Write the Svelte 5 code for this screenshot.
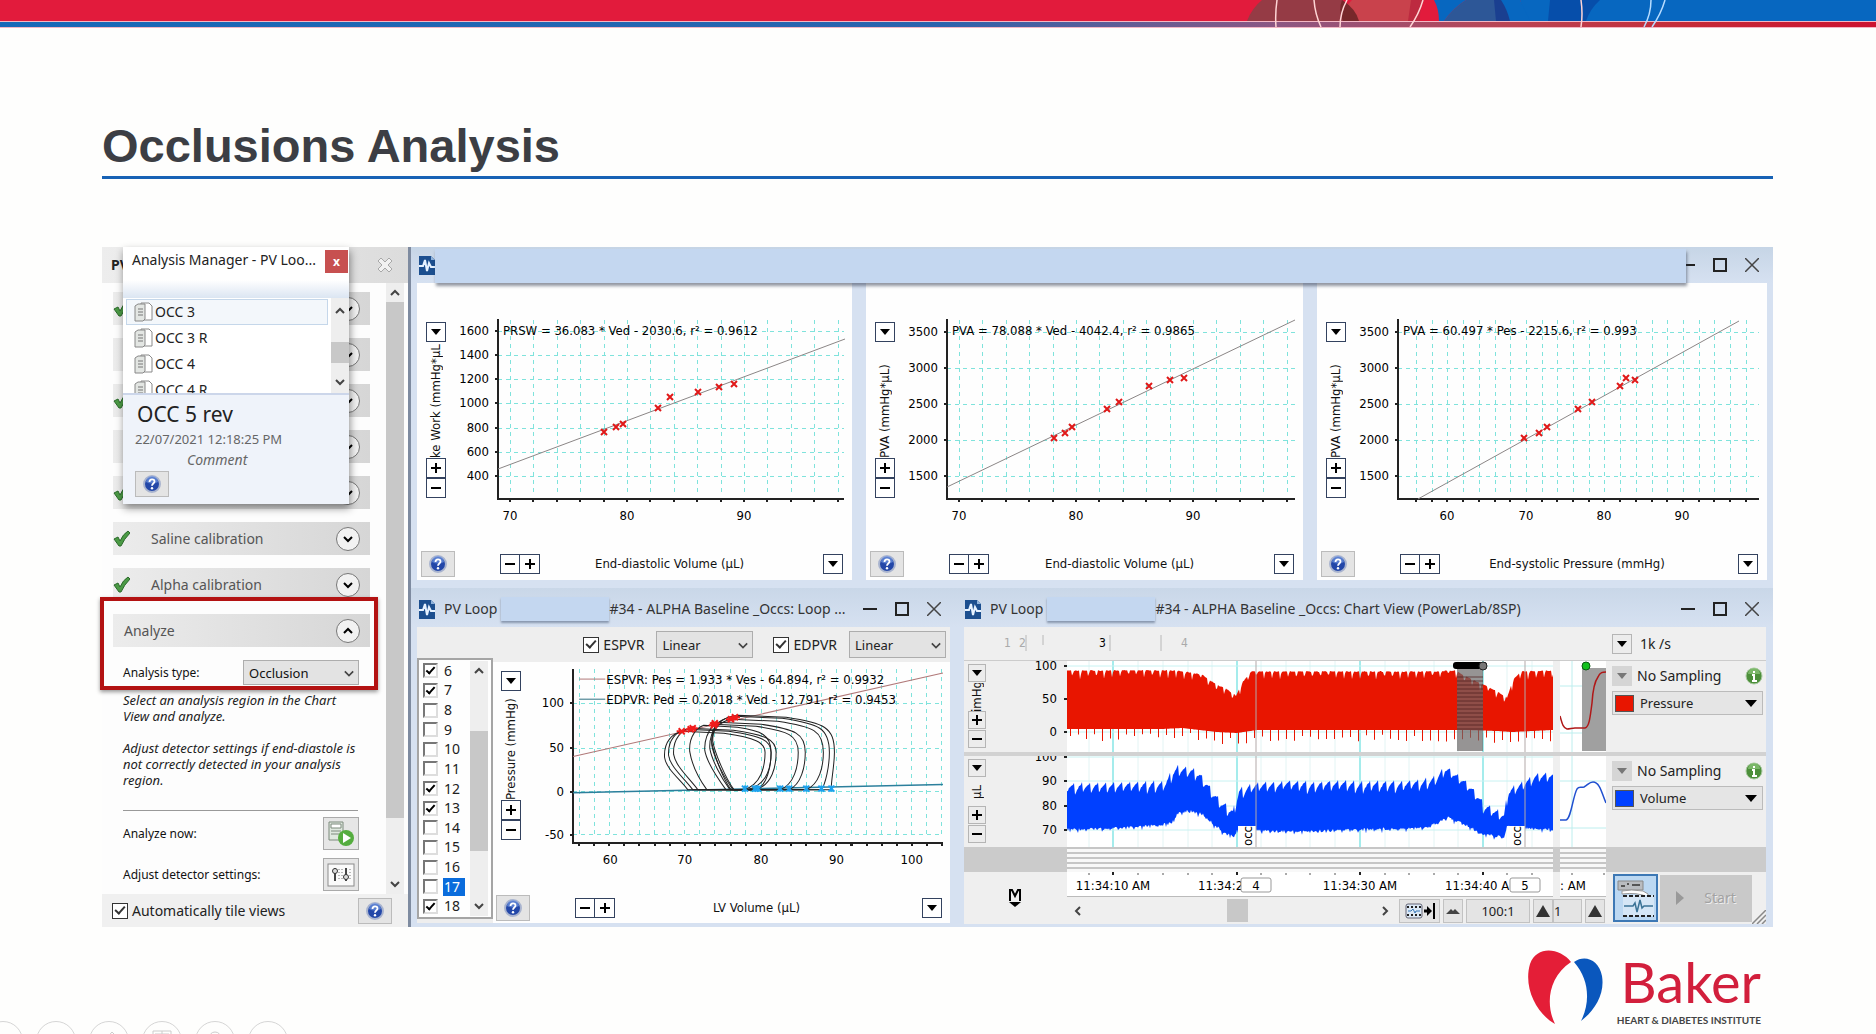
<script lang="ts">
  type Plot = {
    name: string;
    equation: string;
    yLabel: string;
    xLabel: string;
    width: number;
    axisX: number;
    grid: number[];
    xTicks: [number, number][];
    yTicks: [number, number][];
    line: number[];
    points: [number, number][];
  };

  // evenly spaced positions, rounded so that the thin grid lines stay crisp
  function steps(start: number, step: number, count: number) {
    return Array.from({ length: count }, (_, i) => Math.round(start + i * step));
  }

  const pvaTicks: [number, number][] = [[3500, 17], [3000, 53], [2500, 89], [2000, 125], [1500, 161]];

  const plots: Plot[] = [
    {
      name: 'prsw',
      equation: 'PRSW = 36.083 * Ved - 2030.6, r² = 0.9612',
      yLabel: 'ke Work (mmHg*µL',
      xLabel: 'End-diastolic Volume (µL)',
      width: 397,
      axisX: 43,
      grid: steps(55, 23.4, 15),
      xTicks: [[70, 55], [80, 172], [90, 289]],
      yTicks: [[1600, 16], [1400, 40], [1200, 64], [1000, 88], [800, 113], [600, 137], [400, 161]],
      line: [43, 154, 390, 24],
      points: [[149, 117], [161, 112], [168, 109], [203, 93], [215, 82], [243, 77], [264, 72], [279, 69]],
    },
    {
      name: 'pva-ved',
      equation: 'PVA = 78.088 * Ved - 4042.4, r² = 0.9865',
      yLabel: 'PVA (mmHg*µL)',
      xLabel: 'End-diastolic Volume (µL)',
      width: 399,
      axisX: 43,
      grid: steps(55, 23.4, 15),
      xTicks: [[70, 55], [80, 172], [90, 289]],
      yTicks: pvaTicks,
      line: [43, 172, 391, 5],
      points: [[150, 123], [161, 118], [168, 112], [203, 94], [215, 87], [245, 71], [266, 65], [280, 63]],
    },
    {
      name: 'pva-pes',
      equation: 'PVA = 60.497 * Pes - 2215.6, r² = 0.993',
      yLabel: 'PVA (mmHg*µL)',
      xLabel: 'End-systolic Pressure (mmHg)',
      width: 412,
      axisX: 43,
      grid: steps(61, 15.7, 22),
      xTicks: [[60, 92], [70, 171], [80, 249], [90, 327]],
      yTicks: pvaTicks,
      line: [63, 184, 384, 6],
      points: [[169, 123], [184, 118], [192, 112], [223, 94], [237, 87], [265, 71], [271, 63], [280, 65]],
    },
  ];

  const loopGrid = steps(28, 15.05, 25).filter((x) => x < 392);
  const loopXTicks = [[60, 59], [70, 133], [80, 209], [90, 284], [100, 359]];
  const loopYTicks = [[100, 41], [50, 86], [0, 129], [-50, 172]];

  // end-systole, its pressure, leftmost x, bottom left x, bottom right x, rightmost x
  const loops = [
    [131, 69, 113, 136, 192, 213],
    [135, 67, 117, 141, 196, 219],
    [139, 66, 122, 146, 204, 224],
    [152, 63, 138, 155, 205, 219],
    [162, 62, 153, 174, 228, 246],
    [166, 60, 158, 178, 237, 253],
    [180, 57, 160, 181, 254, 271],
    [183, 54, 160, 179, 269, 277],
    [186, 53, 161, 182, 279, 282],
  ];
  const edMarks = [193, 203, 206, 228, 237, 254, 269, 279];
  const esMarks = [[130, 69], [139, 67], [141, 66], [162, 63], [163, 61], [179, 57], [183, 55]];

  function loopPath([es, y, left, bl, br, right]: number[]) {
    const top = y + (right - es) * 0.08;
    return (
      `M${es} ${y} C${left + 8} ${y + 2} ${left - 1} ${y + 10} ${left} ${y + 26}` +
      ` C${left + 2} ${y + 38} ${bl - 8} 116 ${bl} 127 L${br} 127` +
      ` C${right - 4} 122 ${right} 104 ${right} 90` +
      ` C${right} ${top + 4} ${right - 10} ${top} ${(es + right) / 2} ${y + 2} Z`
    );
  }

  let cycles = $state(
    [6, 7, 8, 9, 10, 11, 12, 13, 14, 15, 16, 17, 18].map((n) => ({
      n,
      on: [6, 7, 12, 13, 18].includes(n),
    }))
  );
  let selectedCycle = $state(17);

  // linear interpolation through [x, y] knots
  function envelope(knots: number[][], x: number) {
    for (let i = 1; i < knots.length; i++) {
      const [x0, y0] = knots[i - 1];
      const [x1, y1] = knots[i];
      if (x <= x1) return y0 + ((y1 - y0) * (x - x0)) / (x1 - x0);
    }
    return knots[knots.length - 1][1];
  }

  function jitter(n: number) {
    const v = Math.sin(n * 12.9898) * 43758.5453;
    return v - Math.floor(v);
  }

  const pressureTop = [[0, 9], [110, 9], [135, 13], [148, 22], [160, 28], [169, 34], [176, 20], [184, 10], [370, 10], [388, 9], [405, 18], [425, 27], [440, 36], [446, 18], [454, 10], [486, 9]];
  const pressureBottom = [[0, 68], [95, 68], [115, 67], [150, 71], [170, 72], [190, 69], [400, 69], [430, 70], [445, 71], [486, 69]];
  const volumeTop = [[0, 29], [98, 27], [106, 14], [112, 11], [130, 15], [142, 30], [152, 44], [166, 55], [172, 34], [184, 28], [220, 26], [350, 25], [370, 20], [378, 10], [386, 16], [402, 28], [416, 46], [437, 58], [441, 32], [456, 26], [470, 18], [486, 18]];
  const volumeBottom = [[0, 72], [70, 70], [104, 66], [110, 57], [120, 53], [136, 57], [148, 68], [158, 76], [167, 79], [172, 70], [190, 73], [230, 74], [360, 70], [380, 60], [396, 66], [414, 76], [437, 80], [440, 69], [486, 72]];

  function pressureTrace() {
    let d = 'M0 68';
    for (let x = 0; x <= 486; x++) {
      const notch = x % 8 === 5 ? 6 : x % 8 === 6 ? 3 : 0;
      d += ` L${x} ${(envelope(pressureTop, x) + notch * (0.4 + jitter(x)) + jitter(x + 3)).toFixed(1)}`;
    }
    for (let x = 486; x >= 0; x--) {
      const base = envelope(pressureBottom, x);
      d += ` L${x} ${base.toFixed(1)}`;
      if (x % 8 === 4) {
        const tip = base + 4 + jitter(x) * 8;
        d += ` L${x} ${tip.toFixed(1)} L${x - 1} ${tip.toFixed(1)} L${x - 1} ${base.toFixed(1)}`;
      }
    }
    return d + ' Z';
  }

  function volumeTrace() {
    let d = 'M0 70';
    for (let x = 0; x <= 486; x++) {
      const beat = Math.floor(x / 8);
      const rise = [9, 7, 4, 3, 1, 0, -1, -3][x % 8];
      const late = x > 175 ? 2 * jitter(beat) : 0;
      const tooth = rise * (0.7 + 0.4 * jitter(beat)) + late + jitter(x);
      d += ` L${x} ${(envelope(volumeTop, x) + tooth).toFixed(1)}`;
    }
    for (let x = 486; x >= 0; x--) {
      d += ` L${x} ${(envelope(volumeBottom, x) + jitter(x) * 3 + (x % 8 === 3 ? 3 : 0)).toFixed(1)}`;
    }
    return d + ' Z';
  }

  const channels = [
    {
      name: 'Pressure',
      unit: 'imHg',
      color: '#e81500',
      trace: pressureTrace(),
      ticks: [[100, 5], [50, 38], [0, 71]],
      strip: 'M0 55 C2 62 3 67 7 68 C10 68 12 67 15 67 H25 C29 66 30 58 32 42 C33 26 35 20 38 16 C40 11 43 11 46 11',
      stripColor: '#b01818',
    },
    {
      name: 'Volume',
      unit: 'µL',
      color: '#0040ff',
      trace: volumeTrace(),
      ticks: [[100, 1], [90, 25], [80, 50], [70, 74]],
      strip: 'M0 64 H6 C11 63 13 40 17 33 C19 30 21 32 24 31 C28 29 29 26 33 26 C40 26 42 38 46 47',
      stripColor: '#2050d0',
    },
  ];

  const sections = ['', '', '', '', '', 'Saline calibration', 'Alpha calibration'];
  const checkedSections = [0, 2, 4, 5, 6];
  const items = ['OCC 3', 'OCC 3 R', 'OCC 4', 'OCC 4 R'];

  let analysisType = $state('Occlusion');
  let autoTile = $state(true);
  let espvr = $state(true);
  let edpvr = $state(true);
  let espvrFit = $state('Linear');
  let edpvrFit = $state('Linear');
</script>

{#snippet helpButton()}
  <button class="help" aria-label="Help">
    <svg width="18" height="18" viewBox="0 0 18 18">
      <circle cx="9" cy="9" r="8" fill="#2347a8" stroke="#a9b4cf" stroke-width="2" />
      <path d="M3 7 A6 6 0 0 1 15 7 Q9 10 3 7Z" fill="#6f94e0" opacity=".7" />
      <path d="M6.5 7 C6.500 3.500 11.500 3.500 11.500 6.500 C11.500 8.500 9 8.500 9 10.800" fill="none" stroke="#fff" stroke-width="1.800" />
      <circle cx="9" cy="13.200" r="1.200" fill="#fff" />
    </svg>
  </button>
{/snippet}

{#snippet arrowButton(label: string)}
  <button class="box" aria-label={label}>
    <svg width="10" height="6" viewBox="0 0 10 6"><path d="M0 0 H10 L5 6Z" fill="#000" /></svg>
  </button>
{/snippet}

{#snippet signButton(plus: boolean)}
  <button class="box" aria-label={plus ? 'Zoom in' : 'Zoom out'}>
    <svg width="10" height="10" viewBox="0 0 10 10">
      <path d={plus ? 'M0 5 H10 M5 0 V10' : 'M0 5 H10'} stroke="#000" stroke-width="2" />
    </svg>
  </button>
{/snippet}

{#snippet chevron(d: string, size: number)}
  <svg class="chev" width={size} height={size} viewBox="0 0 12 12">
    <path {d} fill="none" stroke="#444" stroke-width="2" />
  </svg>
{/snippet}

{#snippet appIcon()}
  <svg class="app-icon" width="16" height="20" viewBox="0 0 16 20">
    <path d="M0 1 H12 L16 5 V20 H0Z" fill="#1c4f8f" />
    <path d="M12 1 L16 5 H12Z" fill="#8fb3dc" />
    <path d="M0 11 H4 L6 5 L8 16 L10 8 L12 12 H16" fill="none" stroke="#e6f2ff" stroke-width="2" />
  </svg>
{/snippet}

{#snippet windowControls()}
  <div class="win-controls">
    <button aria-label="Minimize"><svg width="14" height="14" viewBox="0 0 14 14"><path d="M0 7 H14" stroke="#222" stroke-width="2" /></svg></button>
    <button aria-label="Maximize"><svg width="14" height="14" viewBox="0 0 14 14"><rect x="1" y="1" width="12" height="12" fill="none" stroke="#222" stroke-width="2" /></svg></button>
    <button aria-label="Close"><svg width="14" height="14" viewBox="0 0 14 14"><path d="M0 0 L14 14 M14 0 L0 14" stroke="#444" stroke-width="1.500" /></svg></button>
  </div>
{/snippet}

{#snippet tick()}
  <svg class="tick" width="17" height="17" viewBox="0 0 17 17">
    <path d="M1 9 L5 7 L7 11 Q10 4 15 1 L17 3 Q11 9 8 16 L6 16Z" fill="#4b9a45" stroke="#2c6a2c" />
  </svg>
{/snippet}

<div class="slide">
  <div class="banner">
    <svg class="banner-art" viewBox="0 0 1876 28" preserveAspectRatio="none" aria-hidden="true">
      <defs>
        <linearGradient id="stripe">
          <stop offset="0" stop-color="#1769b8" />
          <stop offset=".5" stop-color="#2b63ad" />
          <stop offset=".68" stop-color="#8c5783" />
          <stop offset=".8" stop-color="#b84555" />
          <stop offset=".9" stop-color="#c52a38" />
          <stop offset="1" stop-color="#cc1230" />
        </linearGradient>
      </defs>
      <rect width="1876" height="21" fill="#e21b3c" />
      <path d="M1247 21 Q1252 8 1262 0 H1342 Q1356 9 1359 21Z" fill="#953b45" />
      <path d="M1345 21 Q1342 9 1352 0 H1412 L1409 21Z" fill="#c9424c" />
      <path d="M1342 0 Q1356 9 1359 21 H1343 Q1338 10 1342 0Z" fill="#77282a" />
      <path d="M1411 0 H1424 Q1419 10 1420 21 H1408Z" fill="#bd2a40" />
      <path d="M1520 0 H1876 V21 H1527Z" fill="#0767c0" />
      <path d="M1444 21 Q1453 8 1466 0 H1494 Q1504 8 1509 21Z" fill="#2d5797" />
      <path d="M1434 0 H1520 L1530 21 H1509 Q1504 8 1494 0 H1466 Q1453 8 1444 21 H1439 Q1439 9 1434 0Z" fill="#0767c0" />
      <path d="M1494 0 H1501 Q1507 9 1510 21 H1496Z" fill="#1a3f90" />
      <path d="M1550 0 H1600 Q1590 9 1586 21 H1548Z" fill="#064eaa" />
      <rect y="21" width="1876" height="7" fill="#f4b7c4" />
      <rect y="22" width="1876" height="5" fill="url(#stripe)" />
      <g fill="none" stroke="#ffd5d5" stroke-width="1.500">
        <path d="M1277 0 Q1275 14 1276 27" />
        <path d="M1314 0 Q1315 14 1321 27" />
        <path d="M1347 0 Q1340 13 1340 27" />
        <path d="M1423 0 Q1419 14 1410 27" />
        <path d="M1581 0 Q1583 14 1581 27" />
      </g>
      <g fill="none" stroke="#b7dcff" stroke-width="1.500">
        <path d="M1651 0 Q1651 14 1644 27" />
        <path d="M1665 0 Q1661 14 1652 27" />
      </g>
    </svg>
  </div>

  <h1>Occlusions Analysis</h1>

  <div class="stage">
    <!-- Settings pane -->
    <aside class="pane">
      <div class="pane-head">
        <b>PV</b>
        <button class="bare" aria-label="Close pane">
          <svg width="16" height="16" viewBox="0 0 16 16">
            <path d="M1 4 L4 1 L8 5 L12 1 L15 4 L11 8 L15 12 L12 15 L8 11 L4 15 L1 12 L5 8Z" fill="#f2f2f2" stroke="#a8a8a8" />
          </svg>
        </button>
      </div>
      <div class="pane-body">
        <div class="sections">
          {#each sections as section, i}
            <button class="section">
              <span class="mark">{#if checkedSections.includes(i)}{@render tick()}{/if}</span>
              <span class="section-name">{section}</span>
              <span class="round">{@render chevron('M2 4 L6 8 L10 4', 12)}</span>
            </button>
          {/each}
          <button class="section open">
            <span class="section-name">Analyze</span>
            <span class="round">{@render chevron('M2 8 L6 4 L10 8', 12)}</span>
          </button>
          <div class="field">
            <label for="analysis-type">Analysis type:</label>
            <span class="select">
              <select id="analysis-type" bind:value={analysisType}>
                <option>Occlusion</option>
                <option>Steady state</option>
              </select>
              {@render chevron('M1 4 L6 9 L11 4', 10)}
            </span>
          </div>
          <p class="hint">Select an analysis region in the Chart View and analyze.</p>
          <p class="hint">Adjust detector settings if end-diastole is not correctly detected in your analysis region.</p>
          <hr />
          <div class="field action">
            <span>Analyze now:</span>
            <button class="tool" aria-label="Analyze now">
              <svg width="28" height="26" viewBox="0 0 28 26">
                <path d="M2 1 H16 V19 H2Z" fill="#dfe8df" stroke="#7d8a7d" />
                <path d="M4 3 H14 V7 H4Z M4 10 H14 M4 13 H14" fill="#fff" stroke="#7d8a7d" />
                <circle cx="19" cy="17" r="8" fill="#55ad3f" />
                <path d="M16 12 L24 17 L16 22Z" fill="#fff" />
              </svg>
            </button>
          </div>
          <div class="field action">
            <span>Adjust detector settings:</span>
            <button class="tool" aria-label="Adjust detector settings">
              <svg width="28" height="24" viewBox="0 0 28 24">
                <rect x="1" y="1" width="26" height="22" fill="#fafafa" stroke="#8b8b8b" />
                <path d="M8 5 V18 M19 5 V18" stroke="#444" stroke-width="2" />
                <path d="M12 6 V18 M15 6 V18 M23 6 V18" stroke="#777" stroke-dasharray="1 2" />
                <circle cx="8" cy="8" r="2.500" fill="#ddd" stroke="#333" />
                <circle cx="19" cy="14" r="2.500" fill="#ddd" stroke="#333" />
              </svg>
            </button>
          </div>
        </div>
        <div class="scrollbar">
          {@render chevron('M2 8 L6 4 L10 8', 12)}
          <div class="thumb"></div>
          {@render chevron('M2 4 L6 8 L10 4', 12)}
        </div>
      </div>
      <div class="pane-foot">
        <label class="flat"><input type="checkbox" bind:checked={autoTile} />Automatically tile views</label>
        {@render helpButton()}
      </div>

      <div class="highlight"></div>

      <!-- Analysis manager popup -->
      <section class="manager">
        <header>
          <span>Analysis Manager - PV Loo...</span>
          <button class="close" aria-label="Close Analysis Manager">x</button>
        </header>
        <div class="manager-list">
          <ul>
            {#each items as item, i}
              <li class:current={i === 0}>
                <svg width="19" height="20" viewBox="0 0 19 20">
                  <path d="M7 1 H15 L18 4 V18 H7Z" fill="#fff" stroke="#8a8a8a" />
                  <path d="M1 4 L4 2 H11 V17 L9 19 H1Z" fill="#e3e6e3" stroke="#888" />
                  <path d="M4 7 H9 M4 10 H9 M4 13 H9" stroke="#777" />
                </svg>
                {item}
              </li>
            {/each}
          </ul>
          <div class="scrollbar">
            {@render chevron('M2 8 L6 4 L10 8', 12)}
            <div class="thumb"></div>
            {@render chevron('M2 4 L6 8 L10 4', 12)}
          </div>
        </div>
        <div class="details">
          <h2>OCC 5 rev</h2>
          <time>22/07/2021 12:18:25 PM</time>
          <em>Comment</em>
          {@render helpButton()}
        </div>
      </section>
    </aside>

    <main class="workspace">
      <!-- Regression plots -->
      <section class="window">
        <header class="title-bar">
          {@render appIcon()}
          <span class="cover wide"></span>
          {@render windowControls()}
        </header>
        <div class="plots">
          {#each plots as plot (plot.name)}
            <div class="plot">
              <div class="plot-main">
                <div class="y-tools">
                  {@render arrowButton('Y axis options')}
                  <span class="y-label">{plot.yLabel}</span>
                  {@render signButton(true)}
                  {@render signButton(false)}
                </div>
                <svg class="graph" viewBox="0 0 {plot.width} 214">
                  <g class="grid">
                    {#each plot.grid as x}<path d="M{x} 5 V178" />{/each}
                    {#each plot.yTicks as [, y]}<path d="M{plot.axisX} {y} H{plot.width - 8}" />{/each}
                  </g>
                  <g class="axis">
                    <path d="M{plot.axisX} 4 V184 H{plot.width - 8}" />
                    {#each plot.grid as x}<path d="M{x} 184 V187" />{/each}
                    {#each plot.yTicks as [, y]}<path d="M{plot.axisX - 3} {y} H{plot.axisX}" />{/each}
                  </g>
                  {#each plot.xTicks as [value, x]}<text {x} y="205" text-anchor="middle">{value}</text>{/each}
                  {#each plot.yTicks as [value, y]}<text x={plot.axisX - 9} y={y + 4} text-anchor="end">{value}</text>{/each}
                  <path d="M{plot.line[0]} {plot.line[1]} L{plot.line[2]} {plot.line[3]}" stroke="#8b8686" fill="none" />
                  {#each plot.points as [x, y]}
                    <path d="M{x - 3} {y - 3} l6 6 m0 -6 l-6 6" stroke="#e01818" stroke-width="2" />
                  {/each}
                  <text x={plot.axisX + 5} y="20">{plot.equation}</text>
                </svg>
              </div>
              <div class="x-tools">
                {@render helpButton()}
                <div class="pair">{@render signButton(false)}{@render signButton(true)}</div>
                <span class="x-label">{plot.xLabel}</span>
                {@render arrowButton('X axis options')}
              </div>
            </div>
          {/each}
        </div>
      </section>

      <div class="lower">
        <!-- Loop view -->
        <section class="window">
          <header class="title-bar">
            {@render appIcon()}
            <span class="title">PV Loop</span>
            <span class="cover"></span>
            <span class="title rest">#34 - ALPHA Baseline _Occs: Loop ...</span>
            {@render windowControls()}
          </header>
          <div class="loop-view">
            <div class="cycle-col">
              <div class="cycles">
                <div class="cycle-rows">
                  {#each cycles as cycle (cycle.n)}
                    <label class="cycle" class:selected={cycle.n === selectedCycle}>
                      <input type="checkbox" bind:checked={cycle.on} onclick={() => (selectedCycle = cycle.n)} />
                      <span>{cycle.n}</span>
                    </label>
                  {/each}
                </div>
                <div class="scrollbar">
                  {@render chevron('M2 8 L6 4 L10 8', 12)}
                  <div class="thumb"></div>
                  {@render chevron('M2 4 L6 8 L10 4', 12)}
                </div>
              </div>
            </div>
            <div class="loop-main">
              <div class="fit-bar">
                <label class="flat"><input type="checkbox" bind:checked={espvr} />ESPVR</label>
                <span class="select">
                  <select aria-label="ESPVR fit" bind:value={espvrFit}><option>Linear</option><option>Quadratic</option></select>
                  {@render chevron('M1 4 L6 9 L11 4', 10)}
                </span>
                <label class="flat second-fit"><input type="checkbox" bind:checked={edpvr} />EDPVR</label>
                <span class="select">
                  <select aria-label="EDPVR fit" bind:value={edpvrFit}><option>Linear</option><option>Exponential</option></select>
                  {@render chevron('M1 4 L6 9 L11 4', 10)}
                </span>
              </div>
              <div class="plot">
                <div class="plot-main">
                  <div class="y-tools">
                    {@render arrowButton('Y axis options')}
                    <span class="y-label">Pressure (mmHg)</span>
                    {@render signButton(true)}
                    {@render signButton(false)}
                  </div>
                  <svg class="graph" viewBox="0 0 397 214">
                    <g class="grid">
                      {#each loopGrid as x}<path d="M{x} 7 V174" />{/each}
                      {#each loopYTicks as [, y]}<path d="M22 {y} H390" />{/each}
                    </g>
                    <g class="axis">
                      <path d="M22 7 V180 H390" />
                      {#each loopGrid as x}<path d="M{x} 180 V183" />{/each}
                      {#each loopYTicks as [, y]}<path d="M19 {y} H22" />{/each}
                    </g>
                    {#each loopXTicks as [value, x]}<text {x} y="201" text-anchor="middle">{value}</text>{/each}
                    {#each loopYTicks as [value, y]}<text x="13" y={y + 4} text-anchor="end">{value}</text>{/each}
                    <path d="M22 94 L390 11" stroke="#b07878" fill="none" />
                    <path d="M22 130 L390 122" stroke="#2c7f9c" stroke-width="1.500" fill="none" />
                    {#each loops as loop}<path d={loopPath(loop)} stroke="#222" fill="none" />{/each}
                    {#each esMarks as [x, y]}<path d="M{x - 5} {y} h10 M{x - 3} {y - 3} l6 6 m0 -6 l-6 6" stroke="#f01c1c" stroke-width="2" />{/each}
                    {#each edMarks as x}<path d="M{x - 3} 123 l6 6 m0 -6 l-6 6 M{x} 123 v6" stroke="#1ea2ee" stroke-width="2" />{/each}
                    <path d="M28 17 H54" stroke="#b07878" />
                    <path d="M28 37 H54" stroke="#2c6f80" />
                    <text x="55" y="22">ESPVR: Pes = 1.933 * Ves - 64.894, r² = 0.9932</text>
                    <text x="55" y="42">EDPVR: Ped = 0.2018 * Ved - 12.791, r² = 0.9453</text>
                  </svg>
                </div>
                <div class="x-tools">
                  {@render helpButton()}
                  <div class="pair">{@render signButton(false)}{@render signButton(true)}</div>
                  <span class="x-label">LV Volume (µL)</span>
                  {@render arrowButton('X axis options')}
                </div>
              </div>
            </div>
          </div>
        </section>

        <!-- Chart view -->
        <section class="window">
          <header class="title-bar">
            {@render appIcon()}
            <span class="title">PV Loop</span>
            <span class="cover"></span>
            <span class="title rest">#34 - ALPHA Baseline _Occs: Chart View (PowerLab/8SP)</span>
            {@render windowControls()}
          </header>
          <div class="chart-view">
            <div class="ruler">
              <svg width="300" height="33" viewBox="0 0 300 33">
                <path d="M62 8 V24 M79 8 V18 M146 8 V24 M197 8 V24" stroke="#b8b8b8" />
                <g fill="#aaa">
                  <text x="40" y="20">1</text>
                  <text x="55" y="20">2</text>
                  <text x="217" y="20">4</text>
                </g>
                <text x="135" y="20">3</text>
              </svg>
              <div class="rate">{@render arrowButton('Sampling rate')}<span>1k /s</span></div>
            </div>

            {#each channels as channel, i (channel.name)}
              <div class="cols channel">
                <div class="gutter">
                  <div class="y-tools">
                    {@render arrowButton('Scale options')}
                    <span class="y-label">{channel.unit}</span>
                    {@render signButton(true)}
                    {@render signButton(false)}
                  </div>
                  <svg width="50" height="91" viewBox="0 0 50 91">
                    {#each channel.ticks as [value, y]}
                      <text x="40" y={y + 4} text-anchor="end">{value}</text>
                      <path d="M47 {y} H50" stroke="#222" stroke-width="2" />
                    {/each}
                  </svg>
                </div>
                <svg class="trace" viewBox="0 0 486 91">
                  <rect width="486" height="91" fill="#fff" />
                  <path d="M22 0 V91 M71 0 V91 M96 0 V91 M121 0 V91 M145 0 V91 M194 0 V91 M219 0 V91 M243 0 V91 M268 0 V91 M318 0 V91 M342 0 V91 M367 0 V91 M391 0 V91 M440 0 V91 M465 0 V91" stroke="#e3f4f4" />
                  <path d="M46 0 V91 M170 0 V91 M293 0 V91 M416 0 V91" stroke="#a5ecec" stroke-width="2" />
                  {#each channel.ticks as [, y]}<path d="M0 {y} H486" stroke="#c8f2f2" />{/each}
                  <path d={channel.trace} fill={channel.color} />
                  {#if i === 0}
                    <rect x="390" y="8" width="26" height="82" fill="#6a6666" opacity=".7" />
                    {#each steps(16, 4, 14) as y}<path d="M390 {y} H416" stroke="#4a1c1c" opacity=".7" />{/each}
                    <rect x="386" y="1" width="34" height="7" rx="3" fill="#000" />
                    <circle cx="416" cy="5" r="4" fill="#777" stroke="#222" />
                  {:else}
                    <rect x="171" y="70" width="18" height="21" fill="#fff" />
                    <rect x="440" y="70" width="18" height="21" fill="#fff" />
                    <text x="185" y="90" transform="rotate(-90 185 90)">occ</text>
                    <text x="454" y="90" transform="rotate(-90 454 90)">occ</text>
                  {/if}
                  <path d="M189 0 V91 M458 0 V91" stroke="#b3a9a9" />
                </svg>
                <span></span>
                <svg class="trace" viewBox="0 0 46 91">
                  <rect width="46" height="91" fill="#fff" />
                  <path d="M12 0 V91 M0 25 H46 M0 72 H46" stroke="#bdeeee" />
                  {#if i === 0}
                    <rect x="22" y="7" width="24" height="83" fill="#a0a0a0" />
                    <circle cx="26" cy="5" r="4" fill="#12c01c" stroke="#0a5a10" />
                  {/if}
                  <path d={channel.strip} fill="none" stroke={channel.stripColor} stroke-width="1.500" />
                </svg>
                <div class="channel-side">
                  <div class="sampling">
                    <button class="box off" aria-label="Sampling options">
                      <svg width="10" height="6" viewBox="0 0 10 6"><path d="M0 0 H10 L5 6Z" fill="#777" /></svg>
                    </button>
                    <span>No Sampling</span>
                    <svg width="18" height="18" viewBox="0 0 18 18">
                      <circle cx="9" cy="9" r="8" fill="#4c8f3a" stroke="#a9c9a0" />
                      <path d="M3 7 A6 6 0 0 1 15 7Z" fill="#8fc77c" opacity=".7" />
                      <path d="M9 4 V6 M7 8 H9 V14 M7 14 H12" stroke="#fff" stroke-width="2" fill="none" />
                    </svg>
                  </div>
                  <button class="channel-name">
                    <i style="background: {channel.color}"></i>
                    <span>{channel.name}</span>
                    <svg width="12" height="7" viewBox="0 0 12 7"><path d="M0 0 H12 L6 7Z" fill="#000" /></svg>
                  </button>
                </div>
              </div>
            {/each}

            <div class="cols stripes">
              <div></div><div class="lined"></div><span></span><div class="lined"></div><div></div>
            </div>

            <div class="cols base">
              <div class="marker">
                <svg width="14" height="20" viewBox="0 0 14 20">
                  <path d="M2 13 V2 H4 L7 8 L10 2 H12 V13" fill="none" stroke="#000" stroke-width="2" />
                  <path d="M1 14 H13 L7 19Z" fill="#000" />
                </svg>
              </div>
              <svg class="time" viewBox="0 0 486 24">
                <path d="M46 0 V3 M170 0 V3 M293 0 V3 M416 0 V3" stroke="#222" stroke-width="2" />
                <path d="M22 1 V3 M71 1 V3 M96 1 V3 M121 1 V3 M145 1 V3 M194 1 V3 M219 1 V3 M243 1 V3 M268 1 V3 M318 1 V3 M342 1 V3 M367 1 V3 M391 1 V3 M440 1 V3 M465 1 V3" stroke="#555" />
                <text x="46" y="18" text-anchor="middle">11:34:10 AM</text>
                <text x="131" y="18">11:34:2</text>
                <text x="293" y="18" text-anchor="middle">11:34:30 AM</text>
                <text x="378" y="18">11:34:40 A</text>
                <rect x="174" y="6" width="30" height="14" rx="2" fill="#fff" stroke="#999" />
                <rect x="443" y="6" width="30" height="14" rx="2" fill="#fff" stroke="#999" />
                <text x="189" y="18" text-anchor="middle">4</text>
                <text x="458" y="18" text-anchor="middle">5</text>
              </svg>
              <svg class="time second" viewBox="0 0 46 24">
                <path d="M12 1 V3 M44 1 V3" stroke="#555" />
                <text x="0" y="18">: AM</text>
              </svg>
              <div class="scroll-row">
                <div class="h-scroll">
                  {@render chevron('M8 2 L4 6 L8 10', 12)}
                  <div class="thumb"></div>
                  {@render chevron('M4 2 L8 6 L4 10', 12)}
                </div>
                <button class="grey wide" aria-label="Scroll to end">
                  <svg width="32" height="18" viewBox="0 0 32 18">
                    <rect x="2" y="2" width="16" height="14" rx="2" fill="#dce9f6" stroke="#667" />
                    <path d="M3 5 H17 M3 13 H17" stroke="#222" stroke-width="2" stroke-dasharray="2 2" />
                    <path d="M4 9 H7 L9 7 L11 11 L12 9 H16" fill="none" stroke="#3878b8" />
                    <path d="M20 9 H24" stroke="#000" stroke-width="3" />
                    <path d="M23 4 L28 9 L23 14Z" fill="#000" />
                    <path d="M30 1 V17" stroke="#000" stroke-width="2" />
                  </svg>
                </button>
                <button class="grey" aria-label="Compress"><svg width="14" height="8" viewBox="0 0 14 8"><path d="M0 7 L5 2 L7 4 L9 2 L14 7Z" fill="#444" /></svg></button>
                <button class="grey ratio">100:1</button>
                <button class="grey" aria-label="Expand"><svg width="14" height="12" viewBox="0 0 14 12"><path d="M0 12 L7 0 L14 12Z" fill="#333" /></svg></button>
                <button class="grey one">1</button>
                <button class="grey" aria-label="Expand strip"><svg width="14" height="12" viewBox="0 0 14 12"><path d="M0 12 L7 0 L14 12Z" fill="#333" /></svg></button>
              </div>
              <div class="start-row">
                <button class="record" aria-label="Chart recording">
                  <svg width="38" height="40" viewBox="0 0 38 40">
                    <path d="M1 3 H26 V12 H1Z" fill="#b9bcc0" stroke="#888" />
                    <path d="M4 8 H8 M10 6 H12 M15 7 H23" stroke="#555" stroke-width="2" />
                    <path d="M5 13 Q14 11 26 13 L31 16 V19 Q20 14 5 16Z" fill="#fff" stroke="#999" />
                    <path d="M6 17 H37 V38 H6Z" fill="#d5e6f6" />
                    <path d="M6 18 H37 M6 38 H37" stroke="#222" stroke-width="2" stroke-dasharray="4 2" />
                    <path d="M7 28 H16 L18 25 L20 34 L23 22 L25 30 L27 28 H36" fill="none" stroke="#3b7396" stroke-width="1.500" />
                  </svg>
                </button>
                <button class="start" disabled>
                  <svg width="8" height="14" viewBox="0 0 8 14"><path d="M0 0 L8 7 L0 14Z" fill="#999" /></svg>
                  Start
                </button>
                <svg class="grip" width="14" height="14" viewBox="0 0 14 14"><path d="M0 14 L14 0 M5 14 L14 5 M10 14 L14 10" stroke="#888" stroke-width="1.500" /></svg>
              </div>
            </div>
          </div>
        </section>
      </div>
    </main>
  </div>

  <footer class="brand">
    <svg width="78" height="78" viewBox="0 0 78 78" aria-hidden="true">
      <path d="M44 14 C33 0 10 -3 3 16 C-4 40 10 66 28 76 C19 58 20 30 44 14Z" fill="#e41e37" />
      <path d="M47 14 C58 6 72 12 75 28 C78 46 68 62 54 73 C63 55 63 32 47 14Z" fill="#0a57bd" />
    </svg>
    <div>
      <strong>Baker</strong>
      <small>HEART &amp; DIABETES INSTITUTE</small>
    </div>
  </footer>

  <nav class="show-tools" aria-label="Slide show">
    {#each ['Previous', 'Next', 'Pen', 'All slides', 'Zoom', 'More'] as tool}
      <button aria-label={tool}>
        {#if tool === 'Pen'}
          <svg width="12" height="12" viewBox="0 0 12 12"><path d="M1 12 L9 3 L11 5 L5 12" fill="none" stroke="#ccc" /></svg>
        {:else if tool === 'All slides'}
          <svg width="20" height="12" viewBox="0 0 20 12"><path d="M1 12 V2 H19 V12 M10 2 V12 M3 5 H17" fill="none" stroke="#ccc" /></svg>
        {:else if tool === 'Zoom'}
          <svg width="16" height="12" viewBox="0 0 16 12"><circle cx="8" cy="9" r="6" fill="none" stroke="#ccc" /></svg>
        {/if}
      </button>
    {/each}
  </nav>
</div>

<style>
  :global(body) {
    margin: 0;
    background: #fefefd;
  }

  .slide {
    --ui: 'Noto Sans', 'Open Sans', sans-serif;
    --plot: 'DejaVu Sans Condensed', 'DejaVu Sans', 'Noto Sans', sans-serif;
    position: relative;
    min-height: 100vh;
    box-sizing: border-box;
    overflow: hidden;
    font-family: var(--ui);
    font-size: 14px;
    line-height: 16px;
    color: #222;
  }

  button,
  select,
  input {
    font: inherit;
    color: inherit;
    margin: 0;
    box-sizing: border-box;
  }

  button {
    padding: 0;
    border: none;
    background: none;
    cursor: pointer;
  }

  svg {
    display: block;
    flex: none;
  }

  .banner-art {
    width: 100%;
    height: 28px;
  }

  h1 {
    margin: 91px 103px 0 102px;
    padding-bottom: 3px;
    border-bottom: 3px solid #1762b5;
    font: bold 47px/54px 'Liberation Sans', Arial, sans-serif;
    color: #3c3e44;
  }

  .stage {
    display: grid;
    grid-template-columns: 309px minmax(0, 1fr);
    margin: 68px 103px 0 102px;
  }

  /* Settings pane */
  .pane {
    position: relative;
    display: flex;
    flex-direction: column;
    border-right: 3px solid #7e8ba0;
    background: #fdfdfd;
  }

  .pane-head {
    display: flex;
    justify-content: space-between;
    align-items: center;
    height: 36px;
    padding: 0 15px 0 9px;
    background: linear-gradient(90deg, #ededed, #dcdcdc);
  }

  .bare {
    display: flex;
  }

  .pane-body {
    display: flex;
    flex: 1 1 0;
    min-height: 0;
    overflow: hidden;
  }

  .sections {
    flex: 1;
    padding: 9px 16px 0 11px;
  }

  .section {
    display: flex;
    align-items: center;
    width: 100%;
    height: 33px;
    margin-bottom: 13px;
    padding-right: 10px;
    background: linear-gradient(90deg, #ececec, #d6d6d6);
    color: #555;
    text-align: left;
  }

  .mark {
    width: 38px;
  }

  .section-name {
    flex: 1;
  }

  .section.open {
    padding-left: 11px;
  }

  .round {
    display: flex;
    align-items: center;
    justify-content: center;
    width: 22px;
    height: 22px;
    border: 1px solid #777;
    border-radius: 50%;
    background: #f2f2f2;
  }

  .round :global(path) {
    stroke: #000;
  }

  .field {
    display: flex;
    align-items: center;
    justify-content: space-between;
    margin-left: 10px;
    padding-right: 11px;
    font-size: 12px;
    color: #111;
  }

  .select {
    position: relative;
    display: flex;
    align-items: center;
  }

  .select select {
    appearance: none;
    width: 116px;
    height: 25px;
    padding: 0 8px 0 5px;
    border: 1px solid #adadad;
    border-radius: 0;
    background: #e3e3e3;
    font-size: 13px;
  }

  .select :global(.chev) {
    position: absolute;
    right: 5px;
    pointer-events: none;
  }

  .hint {
    margin: 7px 8px 16px 10px;
    font-size: 13px;
    font-style: italic;
  }

  .hint + .hint {
    margin-top: 0;
  }

  hr {
    margin: 22px 12px 6px 10px;
    border: none;
    border-top: 1px solid #999;
  }

  .action {
    margin-bottom: 8px;
  }

  .tool {
    display: flex;
    align-items: center;
    justify-content: center;
    width: 36px;
    height: 33px;
    border: 1px solid #aaa;
    background: #e6e6e6;
  }

  .scrollbar {
    display: flex;
    flex-direction: column;
    align-items: center;
    box-sizing: border-box;
    width: 18px;
    background: #eee;
  }

  .scrollbar .thumb {
    width: 100%;
    background: #c8c8c8;
  }

  .pane .pane-body > .scrollbar {
    padding: 4px 0;
    margin-right: 4px;
  }

  .pane-body > .scrollbar .thumb {
    height: 516px;
    margin: 3px 0 auto;
  }

  .pane-foot {
    display: flex;
    align-items: center;
    justify-content: space-between;
    height: 33px;
    padding: 0 16px 0 10px;
    background: #f0f0f0;
  }

  .flat {
    display: flex;
    align-items: center;
    gap: 4px;
  }

  input[type='checkbox'] {
    appearance: none;
    position: relative;
    flex: none;
    width: 16px;
    height: 16px;
    border: 1px solid #333;
    background: #fff;
  }

  input[type='checkbox']:checked::before {
    content: '';
    position: absolute;
    left: 4px;
    top: 0;
    width: 4px;
    height: 8px;
    border: solid #333;
    border-width: 0 2px 2px 0;
    transform: rotate(42deg);
  }

  .help {
    display: flex;
    align-items: center;
    justify-content: center;
    width: 34px;
    height: 26px;
    border: 1px solid #bbb;
    background: #e4e4e4;
  }

  .highlight {
    position: absolute;
    left: -2px;
    top: 350px;
    width: 278px;
    height: 93px;
    box-sizing: border-box;
    border: 4px solid #b31212;
    box-shadow: 0 2px 4px rgba(0, 0, 0, 0.4);
    pointer-events: none;
  }

  .manager {
    position: absolute;
    left: 21px;
    top: 0;
    width: 226px;
    background: #fff;
    box-shadow: 1px 4px 8px rgba(0, 0, 0, 0.45);
  }

  .manager header {
    display: flex;
    justify-content: space-between;
    height: 51px;
    box-sizing: border-box;
    padding: 3px 1px 0 9px;
    background: linear-gradient(#fff 65%, #dbe5f2);
    white-space: nowrap;
  }

  .manager header span {
    padding-top: 2px;
  }

  .close {
    width: 23px;
    height: 23px;
    background: #c75050;
    color: #fff;
    font-size: 12px;
    font-weight: bold;
  }

  .manager-list {
    display: flex;
    height: 95px;
    overflow: hidden;
  }

  .manager-list ul {
    flex: 1;
    margin: 0;
    padding: 1px 3px;
    list-style: none;
  }

  .manager-list li {
    display: flex;
    align-items: center;
    gap: 2px;
    height: 26px;
    padding-left: 7px;
    box-sizing: border-box;
    border: 1px solid transparent;
  }

  .manager-list .current {
    border-color: #c5d7ea;
    background: #f3f7fb;
  }

  .manager-list .scrollbar {
    padding: 7px 0 5px;
  }

  .manager-list .thumb {
    height: 21px;
    margin: 25px 0 auto;
  }

  .details {
    display: flex;
    flex-direction: column;
    align-items: flex-start;
    height: 111px;
    box-sizing: border-box;
    padding: 7px 12px 0;
    border-top: 2px solid #ccd6ea;
    background: #eff3fa;
  }

  .details h2 {
    margin: 0 0 3px 2px;
    font-size: 21px;
    font-weight: normal;
    line-height: 24px;
  }

  .details time {
    color: #666;
    font-size: 13px;
    line-height: 20px;
  }

  .details em {
    margin-left: 52px;
    color: #666;
    line-height: 22px;
  }

  /* Windows */
  .workspace {
    display: flex;
    flex-direction: column;
    gap: 6px;
    min-width: 0;
    background: #d6e1f1;
  }

  .title-bar {
    display: flex;
    align-items: center;
    height: 36px;
    padding: 0 14px 0 8px;
    background: linear-gradient(#c6d5e6, #d6e1f1);
    color: #333;
    white-space: nowrap;
  }

  .title {
    margin-left: 9px;
  }

  .title.rest {
    flex: 1;
    min-width: 0;
    margin-left: 0;
  }

  .cover {
    width: 108px;
    height: 24px;
    margin-left: 4px;
    background: #c4d7f0;
    box-shadow: 0 2px 2px rgba(60, 80, 110, 0.5);
  }

  .cover.wide {
    position: relative;
    flex: 1;
    height: 34px;
    margin: 2px -5px 0 0;
    box-shadow: 1px 3px 3px rgba(40, 50, 70, 0.5);
    z-index: 1;
  }

  .win-controls {
    display: flex;
    gap: 18px;
  }

  .plots {
    display: grid;
    grid-template-columns: minmax(0, 435fr) minmax(0, 437fr) minmax(0, 450fr);
    gap: 14px;
    padding: 0 6px 2px;
  }

  .plots .plot {
    padding-top: 32px;
  }

  .plot {
    background: #fefefe;
  }

  .plot-main {
    display: flex;
    padding-left: 9px;
  }

  .y-tools {
    display: flex;
    flex-direction: column;
    align-items: center;
    flex: none;
    width: 20px;
    height: 176px;
    padding-top: 7px;
    box-sizing: border-box;
  }

  .plots .y-tools {
    height: 183px;
  }

  .y-label {
    flex: 1;
    min-height: 0;
    display: flex;
    align-items: center;
    justify-content: flex-start;
    overflow: hidden;
    writing-mode: vertical-rl;
    transform: rotate(180deg);
    white-space: nowrap;
    font-family: var(--plot);
    font-size: 13px;
    color: #111;
  }

  .box {
    display: flex;
    align-items: center;
    justify-content: center;
    flex: none;
    width: 20px;
    height: 20px;
    border: 1px solid #33425f;
    background: #fff;
  }

  .graph {
    flex: 1;
    min-width: 0;
    margin-left: 9px;
    overflow: visible;
  }

  svg text {
    font-family: var(--plot);
    font-size: 13px;
  }

  .grid path {
    stroke: #7fe3dc;
    stroke-dasharray: 4 4;
    fill: none;
    shape-rendering: crispEdges;
  }

  .axis path {
    stroke: #222;
    stroke-width: 2;
    fill: none;
    shape-rendering: crispEdges;
  }

  .x-tools {
    display: flex;
    align-items: center;
    height: 26px;
    padding: 22px 9px 3px 4px;
  }

  .pair {
    display: flex;
    margin-left: 45px;
  }

  .pair :global(.box + .box) {
    border-left: none;
  }

  .x-label {
    flex: 1;
    text-align: center;
    padding-right: 24px;
    font-family: var(--plot);
    font-size: 13px;
    color: #111;
  }

  .lower {
    display: grid;
    grid-template-columns: minmax(0, 544fr) minmax(0, 818fr);
    flex: 1;
  }

  .lower .title-bar {
    height: 39px;
    padding-top: 2px;
    box-sizing: border-box;
    background: linear-gradient(#c9d7e8, #d6e1f1);
  }

  .lower .window:last-child .title-bar {
    padding-left: 10px;
  }

  .loop-view {
    display: grid;
    grid-template-columns: 76px minmax(0, 1fr);
    margin: 0 5px 3px 6px;
    background: #fefefe;
  }

  .cycle-col {
    display: flex;
    padding: 31px 0 4px;
    background: #eee;
  }

  .cycles {
    display: flex;
    flex: 1;
    justify-content: space-between;
    padding: 1px 3px 1px 4px;
    border: 2px solid #a5a5a5;
    background: #fefefe;
  }

  .cycle-rows {
    display: flex;
    flex-direction: column;
  }

  .cycle {
    display: flex;
    align-items: center;
    flex: 1;
    gap: 5px;
  }

  .cycle input[type='checkbox'] {
    width: 15px;
    height: 15px;
    border: 2px solid;
    border-color: #777 #ddd #ddd #777;
  }

  .cycle input[type='checkbox']:checked::before {
    left: 3px;
    top: 0;
    width: 3px;
    height: 7px;
    border-color: #000;
  }

  .cycle span {
    padding: 1px 5px 1px 1px;
  }

  .cycle.selected span {
    background: #0a6cdc;
    color: #fff;
  }

  .cycles .scrollbar {
    padding: 4px 0;
  }

  .cycles .thumb {
    height: 120px;
    margin: 54px 0 auto;
  }

  .fit-bar {
    display: flex;
    align-items: center;
    justify-content: flex-end;
    gap: 12px;
    height: 35px;
    padding-right: 4px;
    background: #eee;
  }

  .second-fit {
    margin-left: 8px;
  }

  .fit-bar select {
    width: 97px;
    height: 27px;
  }

  .loop-main .y-tools {
    height: 178px;
    padding-top: 9px;
  }

  .loop-main .graph {
    margin-left: 30px;
  }

  .loop-main .plot-main {
    padding-left: 8px;
  }

  .loop-main .x-tools {
    padding: 18px 8px 2px 3px;
  }

  /* Chart view */
  .chart-view {
    margin: 0 7px 3px 9px;
    background: #efefef;
  }

  .ruler {
    display: flex;
    justify-content: space-between;
    height: 33px;
    border-bottom: 1px solid #ccc;
  }

  .ruler svg text {
    font-size: 12px;
  }

  .rate {
    display: flex;
    align-items: center;
    gap: 8px;
    width: 154px;
  }

  .rate :global(.box),
  .gutter :global(.box),
  .sampling :global(.box) {
    border-color: #b5b5b5;
    background: #ececec;
  }

  .cols {
    display: grid;
    grid-template-columns: 103px minmax(0, 486fr) 7px minmax(0, 46fr) 160px;
  }

  .channel + .channel {
    border-top: 4px solid #d2d2d2;
  }

  .gutter {
    display: flex;
    justify-content: space-between;
    padding-left: 3px;
  }

  .gutter .y-tools {
    height: 88px;
    padding-top: 3px;
  }

  .gutter .y-label {
    justify-content: center;
  }

  .gutter :global(.box) {
    width: 18px;
    height: 18px;
    margin-bottom: 1px;
  }

  .trace,
  .time {
    width: 100%;
  }

  .channel-side {
    padding: 5px 3px 0 6px;
  }

  .sampling {
    display: flex;
    align-items: center;
    gap: 5px;
    margin-bottom: 5px;
  }

  .sampling span {
    flex: 1;
  }

  .sampling .off {
    border-color: #d5d5d5;
    background: #d5d5d5;
  }

  .channel-name {
    display: flex;
    align-items: center;
    gap: 6px;
    width: 100%;
    height: 24px;
    padding: 0 5px 0 2px;
    border: 1px solid #bbb;
    background: #e5e5e5;
    font-size: 13px;
  }

  .channel-name i {
    width: 17px;
    height: 15px;
    border: 1px solid #555;
  }

  .channel-name span {
    flex: 1;
    text-align: left;
  }

  .stripes {
    height: 25px;
    background: #cbcbcb;
  }

  .lined {
    background: repeating-linear-gradient(#c6c6c6 0 2px, #f8f8f8 2px 5px);
  }

  .base {
    grid-template-rows: auto 27px;
  }

  .marker {
    grid-row: 1 / 3;
    display: flex;
    align-items: center;
    justify-content: center;
    padding-right: 2px;
  }

  .time {
    background: #fff;
    border-bottom: 1px solid #bbb;
  }

  .time.second {
    grid-column: 4;
  }

  .scroll-row {
    grid-column: 2 / 5;
    grid-row: 2;
    display: flex;
    align-items: center;
    gap: 3px;
    padding-right: 1px;
  }

  .h-scroll {
    display: flex;
    align-items: center;
    justify-content: space-between;
    flex: 1;
    height: 23px;
    padding: 0 5px;
  }

  .h-scroll .thumb {
    width: 21px;
    height: 100%;
    margin-left: 12px;
    background: #c8c8c8;
  }

  .grey {
    display: flex;
    align-items: center;
    justify-content: center;
    width: 20px;
    height: 24px;
    border: 1px solid #c2c2c2;
    background: #e4e4e4;
    font-size: 13px;
  }

  .grey.wide {
    width: 41px;
  }

  .grey.ratio {
    width: 64px;
  }

  .grey.one {
    justify-content: flex-start;
    width: 29px;
    margin-left: -3px;
  }

  .start-row {
    grid-column: 5;
    grid-row: 1 / 3;
    display: flex;
    align-items: center;
    padding-left: 7px;
  }

  .record {
    display: flex;
    align-items: center;
    justify-content: center;
    width: 45px;
    height: 48px;
    border: 2px solid #3d78b5;
    background: #bcd8f2;
  }

  .start {
    display: flex;
    align-items: center;
    justify-content: center;
    gap: 20px;
    flex: 1;
    height: 47px;
    margin-left: 2px;
    background: #c9c9c9;
    color: #a2a2a2;
    text-shadow: 1px 1px #eee;
  }

  .grip {
    align-self: flex-end;
  }

  /* Footer */
  .brand {
    display: flex;
    justify-content: flex-end;
    gap: 12px;
    margin: 21px 115px 0 0;
  }

  .brand div {
    display: flex;
    flex-direction: column;
  }

  .brand strong {
    padding-top: 2px;
    color: #d21f3c;
    font: normal 56px/64px Lato, 'Noto Sans', sans-serif;
    text-align: right;
  }

  .brand small {
    color: #444;
    font: bold 10px/12px Lato, 'Noto Sans', sans-serif;
  }

  .show-tools {
    position: absolute;
    left: -17px;
    bottom: 0;
    display: flex;
    gap: 13px;
    height: 13px;
    overflow: hidden;
  }

  .show-tools button {
    display: flex;
    justify-content: center;
    width: 40px;
    height: 40px;
    padding-top: 7px;
    border: 1px solid #d5d5d5;
    border-radius: 50%;
  }
</style>
